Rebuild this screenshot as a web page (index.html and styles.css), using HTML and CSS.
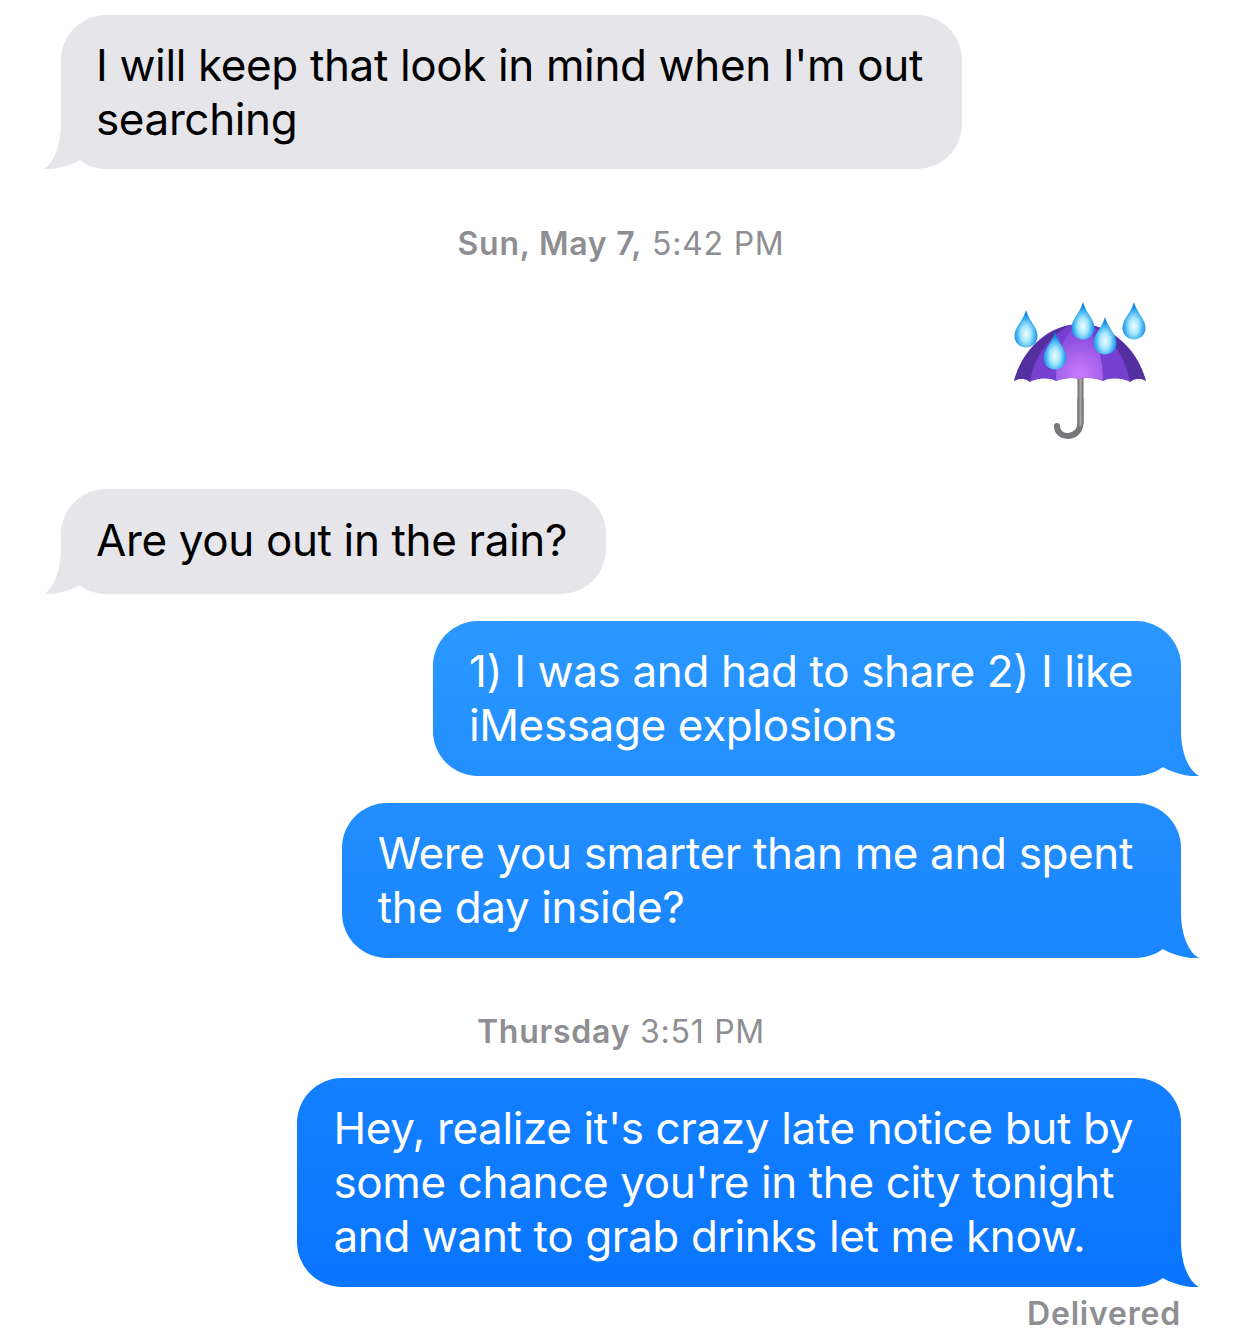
FILE: index.html
```html
<!DOCTYPE html>
<html lang="en">
<head>
    <meta charset="UTF-8">
    <meta name="viewport" content="width=device-width, initial-scale=1.0">
    <title>Messages</title>
    <link rel="stylesheet" href="styles.css">
</head>
<body>
    <div class="chat">
        <div class="bubble in">I will keep that look in mind when I'm out<br>searching<span class="tail"></span></div>

        <p class="stamp stamp-may"><b>Sun, May 7,</b> 5:42 PM</p>

        <svg class="umbrella" viewBox="0 0 180 160" role="img" aria-label="umbrella with rain drops">
            <defs>
                <radialGradient id="glow" gradientUnits="userSpaceOnUse" cx="90" cy="84" r="46">
                    <stop offset="0" stop-color="#c97cfb"/>
                    <stop offset="1" stop-color="#7f45d8"/>
                </radialGradient>
                <linearGradient id="stick" gradientUnits="userSpaceOnUse" x1="87" y1="0" x2="94" y2="0">
                    <stop offset="0" stop-color="#5a5a5e"/>
                    <stop offset="0.5" stop-color="#a8a8ab"/>
                    <stop offset="1" stop-color="#5a5a5e"/>
                </linearGradient>
                <radialGradient id="drop" cx="0.5" cy="0.64" r="0.55">
                    <stop offset="0" stop-color="#effcff"/>
                    <stop offset="0.4" stop-color="#a4e6fd"/>
                    <stop offset="0.78" stop-color="#2fa8f0"/>
                    <stop offset="1" stop-color="#0f7fdc"/>
                </radialGradient>
                <path id="tear" d="M0 -25 C3 -14 11.500 -8 11.500 1 C11.500 7.500 6.500 12.500 0 12.500 C-6.500 12.500 -11.500 7.500 -11.500 1 C-11.500 -8 -3 -14 0 -25 Z"/>
            </defs>
            <path class="handle-hook" d="M90.500 110 V132 C90.500 150 67 150 67 136"/>
            <path class="handle" d="M90.500 88 V133"/>
            <path class="panel-mid" d="M24 91 C32 60 58 34 90 34 C122 34 148 60 156 91 C151 88 145 88 140 92 C134 88 119 87 113 91 C107 88 96 87 90 89 C83 87 73 88 66 91 C60 87 46 88 40 92 C35 88 29 88 24 91 Z"/>
            <path class="panel-edge" d="M24 91 C32 62 54 41 80 35 C60 46 44 66 40 92 C35 88 29 88 24 91 Z"/>
            <path class="panel-edge" d="M156 91 C148 62 126 41 100 35 C120 46 136 66 140 92 C145 88 151 88 156 91 Z"/>
            <path fill="url(#glow)" d="M66 91 C66 62 76 40 90 34 C104 40 113 62 113 91 C107 88 96 87 90 89 C83 87 73 88 66 91 Z"/>
            <use href="#tear" fill="url(#drop)" x="36" y="45"/>
            <use href="#tear" fill="url(#drop)" x="93" y="37"/>
            <use href="#tear" fill="url(#drop)" x="115" y="52"/>
            <use href="#tear" fill="url(#drop)" x="144" y="37"/>
            <use href="#tear" fill="url(#drop)" x="65" y="67"/>
        </svg>

        <div class="bubble in one-line">Are you out in the rain?<span class="tail"></span></div>

        <div class="bubble out">1) I was and had to share 2) I like<br>iMessage explosions<span class="tail"></span></div>
        <div class="bubble out">Were you smarter than me and spent<br>the day inside?<span class="tail"></span></div>

        <p class="stamp stamp-thu"><b>Thursday</b> 3:51 PM</p>

        <div class="bubble out">Hey, realize it's crazy late notice but by<br>some chance you're in the city tonight<br>and want to grab drinks let me know.<span class="tail"></span></div>

        <p class="delivered">Delivered</p>
    </div>
</body>
</html>
```

FILE: styles.css
```css
* {
    margin: 0;
    padding: 0;
    box-sizing: border-box;
}
body {
    background: white;
    font-family: Inter, "Liberation Sans", sans-serif;
    height: 1328px;
    overflow: hidden;
}
.chat {
    display: flex;
    flex-direction: column;
    padding: 15px 61px 0;
}
.bubble {
    position: relative;
    isolation: isolate;
    border-radius: 45px;
    font-size: 44px;
    line-height: 54px;
    letter-spacing: -0.37px;
    white-space: nowrap;
}
.in {
    align-self: flex-start;
    padding: 23px 39px 23px 35px;
    background: #e5e5ea;
    color: black;
}
.one-line {
    margin-top: 39px;
    padding-top: 24px;
    padding-bottom: 27px;
}
.out {
    align-self: flex-end;
    padding: 23px 48px 24px 36px;
    color: white;
    margin-top: 27px;
    background: linear-gradient(180deg, #2b97ff 620px, #0975ff 1288px) fixed;
}
.tail {
    position: absolute;
    z-index: -1;
    bottom: 0;
    width: 60px;
    height: 50px;
    background: inherit;
}
.in .tail {
    left: -17px;
    clip-path: path("M17 4 C17 26 10 44 0 50 C14 51 28 46 38 40 L60 50 L60 4 Z");
}
.out .tail {
    right: -18px;
    clip-path: path("M42 4 C42 26 49 44 60 50 C46 51 32 46 22 40 L0 50 L0 4 Z");
}
.stamp {
    text-align: center;
    font-size: 32px;
    line-height: 40px;
    letter-spacing: 0.75px;
    color: #8e8e93;
    font-weight: 400;
}
.stamp b {
    font-weight: 600;
}
.stamp-may {
    margin-top: 55px;
}
.stamp-thu {
    margin-top: 54px;
    margin-bottom: -1px;
}
.umbrella {
    align-self: flex-end;
    width: 180px;
    height: 160px;
    margin: 26px 11px 0 0;
}
.handle,
.handle-hook {
    fill: none;
    stroke-width: 6;
    stroke-linecap: round;
}
.handle {
    stroke: url(#stick);
}
.handle-hook {
    stroke: #77777b;
}
.panel-mid {
    fill: #7540d0;
}
.panel-edge {
    fill: #52309f;
}
.delivered {
    align-self: flex-end;
    margin-top: 14px;
    font-size: 32px;
    line-height: 26px;
    letter-spacing: 0.8px;
    font-weight: 600;
    color: #8e8e93;
}
```
